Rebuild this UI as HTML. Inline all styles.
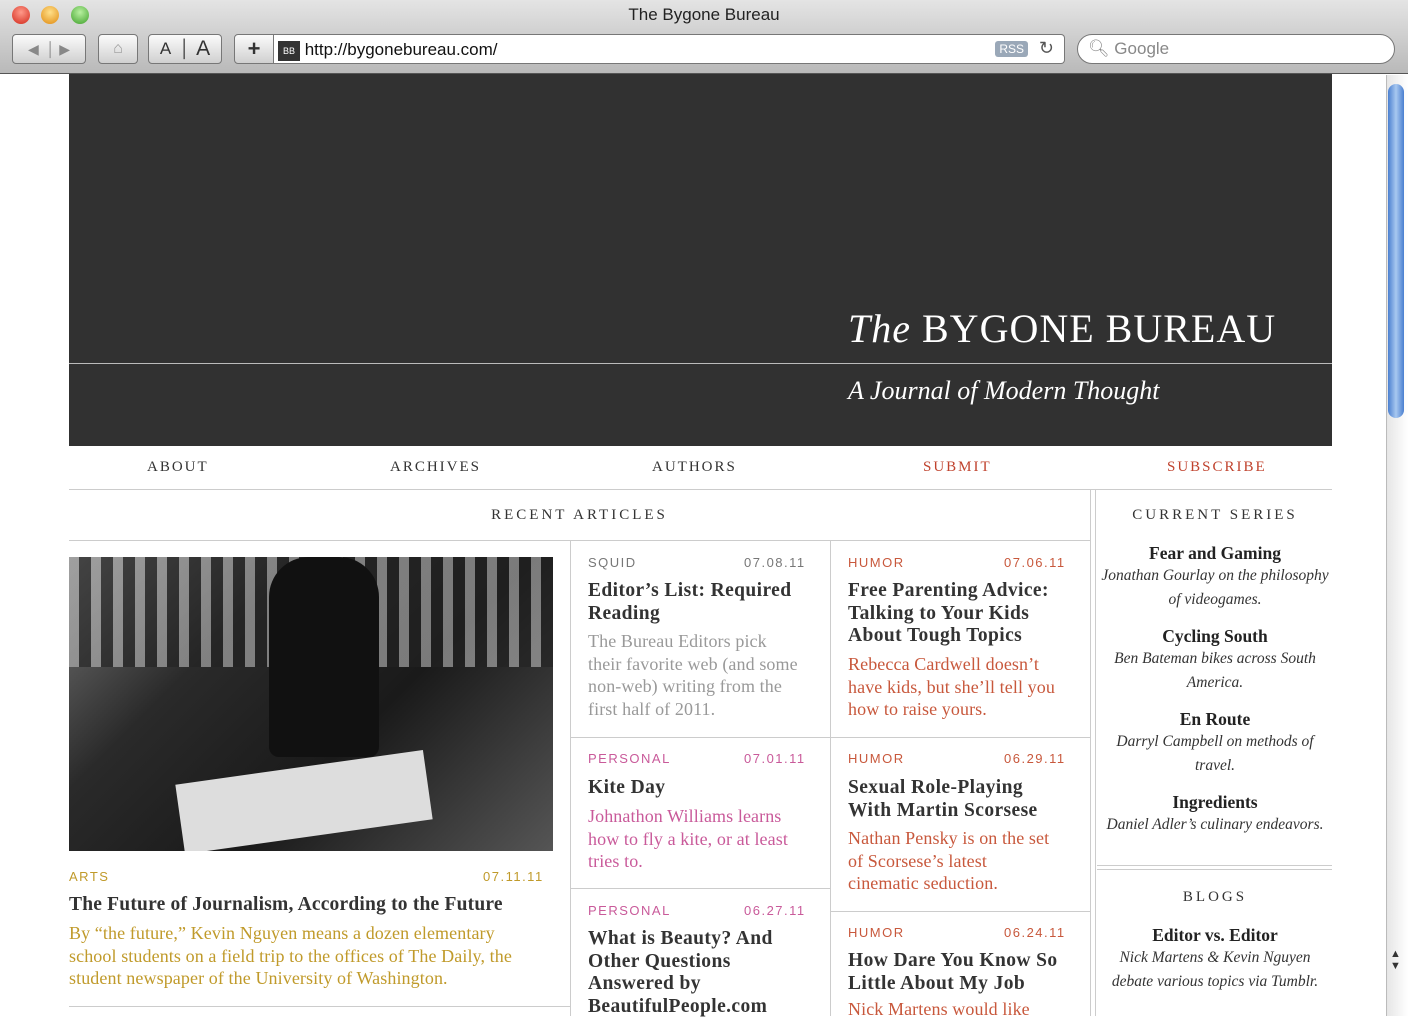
<!DOCTYPE html>
<html><head><meta charset="utf-8"><style>
*{margin:0;padding:0;box-sizing:border-box}
body{width:1408px;height:1016px;overflow:hidden;background:#fff;font-family:"Liberation Serif",serif;position:relative}
.a{position:absolute;white-space:nowrap}
.chrome{left:0;top:0;width:1408px;height:74px;background:linear-gradient(#e4e4e4,#b9b9b9);border-bottom:1px solid #555}
.btn{position:absolute;top:34px;height:30px;border:1px solid #777;border-radius:4px;background:linear-gradient(#fbfbfb,#d0d0d0);font-family:"Liberation Sans",sans-serif;color:#333;display:flex;align-items:center;justify-content:center}
.light{position:absolute;top:6px;width:18px;height:18px;border-radius:50%}
.nav{font-size:15px;letter-spacing:2px;color:#333;top:459px}
.cat{font-family:"Liberation Sans",sans-serif;font-size:13px;letter-spacing:1.5px}
.h{font-weight:bold;font-size:19.5px;line-height:22.5px;color:#333;letter-spacing:.4px}
.p{font-size:18px;line-height:22.5px;letter-spacing:.1px}
.vl{background:#ccc;width:1px}
.hl{background:#ccc;height:1px}
.ser{text-align:center;width:236px;left:1097px}
.ser b{display:block;font-size:17.5px;color:#222;line-height:22px}
.ser i{display:block;font-size:15.5px;color:#333;line-height:24px}
</style></head><body>
<div class="a chrome">
<div class="light" style="left:12px;background:radial-gradient(circle at 50% 35%,#ff9a8a,#d2281a)"></div>
<div class="light" style="left:41px;background:radial-gradient(circle at 50% 35%,#ffe08a,#e08a10)"></div>
<div class="light" style="left:71px;background:radial-gradient(circle at 50% 35%,#b8f0a0,#3ea02a)"></div>
<div class="a" style="left:0;width:1408px;top:5px;text-align:center;font-family:'Liberation Sans',sans-serif;font-size:17px;color:#222">The Bygone Bureau</div>
<div class="btn" style="left:12px;width:74px;color:#888;font-size:14px">◀ &nbsp;│ ▶</div>
<div class="btn" style="left:98px;width:40px;color:#999">⌂</div>
<div class="btn" style="left:148px;width:74px;font-size:17px">A &nbsp;│ <span style="font-size:21px">&nbsp;A</span></div>
<div class="btn" style="left:234px;width:40px;font-size:22px;font-weight:bold;border-radius:4px 0 0 4px">+</div>
<div class="a" style="left:274px;top:34px;width:791px;height:30px;background:#fff;border:1px solid #777;border-left:none;border-radius:0 4px 4px 0;font-family:'Liberation Sans',sans-serif;font-size:17px;color:#111;padding:5px 0 0 4px"><span style="display:inline-block;background:#333;color:#fff;font-size:9px;width:22px;height:20px;vertical-align:middle;text-align:center;line-height:20px">BB</span> http://bygonebureau.com/
<span class="a" style="right:36px;top:6px;background:#9aa8b8;color:#fff;font-size:12px;padding:1px 4px;border-radius:3px">RSS</span><span class="a" style="right:10px;top:3px;font-size:18px;color:#555">↻</span></div>
<div class="a" style="left:1077px;top:34px;width:318px;height:30px;background:#fff;border:1px solid #777;border-radius:15px;font-family:'Liberation Sans',sans-serif;font-size:17px;color:#888;padding:4px 0 0 10px">🔍︎ Google</div>
</div>
<div class="a" style="left:1386px;top:75px;width:22px;height:941px;background:linear-gradient(90deg,#e6e6e6,#fff);border-left:1px solid #bbb"></div>
<div class="a" style="left:1388px;top:84px;width:16px;height:334px;border-radius:8px;background:linear-gradient(90deg,#4a7fd0,#a8c8f0,#4a7fd0)"></div>
<div class="a" style="left:1390px;top:948px;font-size:11px;color:#333;white-space:normal">▲<br>▼</div>

<div class="a" style="left:69px;top:74px;width:1263px;height:372px;background:#313131"></div>
<div class="a" style="left:69px;top:363px;width:1263px;height:1px;background:#bbb"></div>
<div class="a" style="left:848px;top:305px;color:#fff;font-size:40px;letter-spacing:1px"><i>The</i> BYGONE BUREAU</div>
<div class="a" style="left:848px;top:376px;color:#fff;font-size:26px;font-style:italic">A Journal of Modern Thought</div>

<div class="a nav" style="left:147px">ABOUT</div>
<div class="a nav" style="left:390px">ARCHIVES</div>
<div class="a nav" style="left:652px">AUTHORS</div>
<div class="a nav" style="left:923px;color:#c0432e">SUBMIT</div>
<div class="a nav" style="left:1167px;color:#c0432e">SUBSCRIBE</div>
<div class="a hl" style="left:69px;top:489px;width:1263px"></div>

<div class="a nav" style="left:69px;width:1021px;text-align:center;top:507px;letter-spacing:3px">RECENT ARTICLES</div>
<div class="a hl" style="left:69px;top:540px;width:1021px"></div>
<div class="a vl" style="left:1090px;top:490px;height:526px"></div>
<div class="a vl" style="left:1095px;top:490px;height:526px"></div>

<div class="a" style="left:69px;top:557px;width:484px;height:294px;background:linear-gradient(135deg,#777 0%,#2a2a2a 30%,#1a1a1a 60%,#555 100%);overflow:hidden">
<div class="a" style="left:0;top:0;width:484px;height:110px;background:repeating-linear-gradient(90deg,#bbb 0 10px,#222 10px 22px);opacity:.6"></div>
<div class="a" style="left:200px;top:0;width:110px;height:200px;background:#111;border-radius:40px 40px 10px 10px"></div>
<div class="a" style="left:110px;top:210px;width:250px;height:70px;background:#ddd;transform:rotate(-8deg)"></div>
</div>
<div class="a cat" style="left:69px;top:869px;color:#c09a2a">ARTS</div>
<div class="a cat" style="left:483px;top:869px;color:#c09a2a">07.11.11</div>
<div class="a h" style="left:69px;top:894px;letter-spacing:.2px">The Future of Journalism, According to the Future</div>
<div class="a p" style="left:69px;top:922px;color:#c09a2a">By “the future,” Kevin Nguyen means a dozen elementary<br>school students on a field trip to the offices of The Daily, the<br>student newspaper of the University of Washington.</div>
<div class="a hl" style="left:69px;top:1006px;width:501px"></div>

<div class="a vl" style="left:570px;top:541px;height:475px"></div>
<div class="a vl" style="left:830px;top:541px;height:475px"></div>

<div class="a cat" style="left:588px;top:555px;color:#777">SQUID</div>
<div class="a cat" style="left:744px;top:555px;color:#777">07.08.11</div>
<div class="a h" style="left:588px;top:580px">Editor’s List: Required<br>Reading</div>
<div class="a p" style="left:588px;top:630px;color:#999">The Bureau Editors pick<br>their favorite web (and some<br>non-web) writing from the<br>first half of 2011.</div>
<div class="a hl" style="left:571px;top:737px;width:259px"></div>
<div class="a cat" style="left:588px;top:751px;color:#c95a9a">PERSONAL</div>
<div class="a cat" style="left:744px;top:751px;color:#c95a9a">07.01.11</div>
<div class="a h" style="left:588px;top:777px">Kite Day</div>
<div class="a p" style="left:588px;top:805px;color:#c95a9a">Johnathon Williams learns<br>how to fly a kite, or at least<br>tries to.</div>
<div class="a hl" style="left:571px;top:888px;width:259px"></div>
<div class="a cat" style="left:588px;top:903px;color:#c95a9a">PERSONAL</div>
<div class="a cat" style="left:744px;top:903px;color:#c95a9a">06.27.11</div>
<div class="a h" style="left:588px;top:928px">What is Beauty? And<br>Other Questions<br>Answered by<br>BeautifulPeople.com</div>

<div class="a cat" style="left:848px;top:555px;color:#c8583c">HUMOR</div>
<div class="a cat" style="left:1004px;top:555px;color:#c8583c">07.06.11</div>
<div class="a h" style="left:848px;top:580px">Free Parenting Advice:<br>Talking to Your Kids<br>About Tough Topics</div>
<div class="a p" style="left:848px;top:653px;color:#c8583c">Rebecca Cardwell doesn’t<br>have kids, but she’ll tell you<br>how to raise yours.</div>
<div class="a hl" style="left:831px;top:737px;width:259px"></div>
<div class="a cat" style="left:848px;top:751px;color:#c8583c">HUMOR</div>
<div class="a cat" style="left:1004px;top:751px;color:#c8583c">06.29.11</div>
<div class="a h" style="left:848px;top:777px">Sexual Role-Playing<br>With Martin Scorsese</div>
<div class="a p" style="left:848px;top:827px;color:#c8583c">Nathan Pensky is on the set<br>of Scorsese’s latest<br>cinematic seduction.</div>
<div class="a hl" style="left:831px;top:911px;width:259px"></div>
<div class="a cat" style="left:848px;top:925px;color:#c8583c">HUMOR</div>
<div class="a cat" style="left:1004px;top:925px;color:#c8583c">06.24.11</div>
<div class="a h" style="left:848px;top:950px">How Dare You Know So<br>Little About My Job</div>
<div class="a p" style="left:848px;top:998px;color:#c8583c">Nick Martens would like</div>

<div class="a nav ser" style="top:507px;letter-spacing:3px">CURRENT SERIES</div>
<div class="a ser" style="top:542px"><b>Fear and Gaming</b><i>Jonathan Gourlay on the philosophy<br>of videogames.</i></div>
<div class="a ser" style="top:625px"><b>Cycling South</b><i>Ben Bateman bikes across South<br>America.</i></div>
<div class="a ser" style="top:708px"><b>En Route</b><i>Darryl Campbell on methods of<br>travel.</i></div>
<div class="a ser" style="top:791px"><b>Ingredients</b><i>Daniel Adler’s culinary endeavors.</i></div>
<div class="a hl" style="left:1097px;top:865px;width:235px"></div>
<div class="a hl" style="left:1097px;top:869px;width:235px"></div>
<div class="a nav ser" style="top:889px;letter-spacing:3px">BLOGS</div>
<div class="a ser" style="top:924px"><b>Editor vs. Editor</b><i>Nick Martens &amp; Kevin Nguyen<br>debate various topics via Tumblr.</i></div>
</body></html>
